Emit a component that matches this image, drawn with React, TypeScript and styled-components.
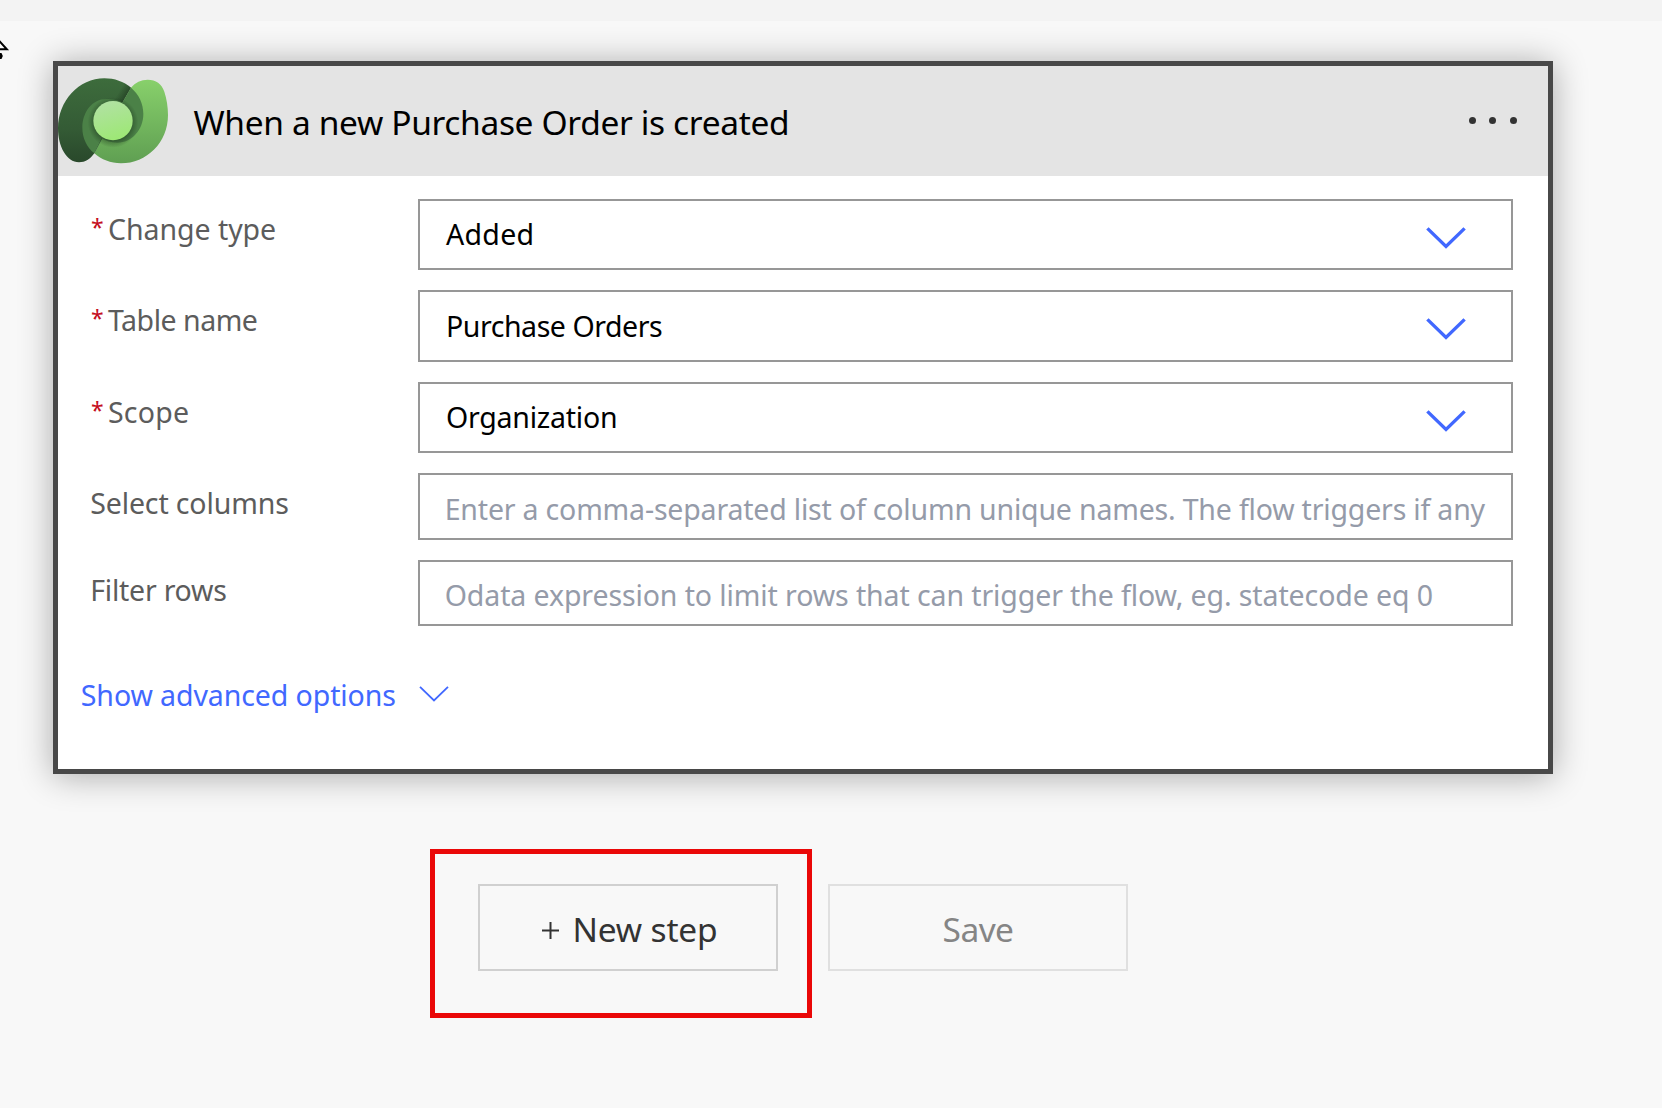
import React from "react";
import styled, { createGlobalStyle } from "styled-components";

const GlobalStyle = createGlobalStyle`
  *, *::before, *::after { box-sizing: border-box; }
  html, body { margin: 0; padding: 0; }
  body {
    background: #f8f8f8;
    font-family: "Noto Sans", "Open Sans", sans-serif;
    overflow: hidden;
  }
`;

const Page = styled.div`
  position: relative;
  width: 1662px;
  height: 1108px;
  overflow: hidden;
  background: #f8f8f8;
`;

const TopStrip = styled.div`
  height: 21px;
  background: #f3f3f3;
`;

const Pointer = styled.svg`
  position: absolute;
  left: 0;
  top: 38px;
`;

const Designer = styled.main`
  display: flex;
  flex-direction: column;
  padding: 40px 0 0 53px;
`;

const Card = styled.section`
  display: flex;
  flex-direction: column;
  width: 1500px;
  height: 713px;
  border: 5px solid #484848;
  background: #fff;
  box-shadow: 0 2px 32px rgba(0, 0, 0, 0.32);
`;

const CardHeader = styled.header`
  display: flex;
  align-items: center;
  height: 110px;
  padding-right: 31px;
  background: #e4e4e4;
`;

const Logo = styled.svg`
  flex: none;
  width: 110px;
  height: 110px;
`;

const Title = styled.h1`
  flex: 1;
  margin: 0;
  padding: 2px 0 0 25.5px;
  font-size: 33.5px;
  font-weight: 400;
  line-height: 46px;
  letter-spacing: -0.35px;
  white-space: nowrap;
  color: #000;
`;

const MenuButton = styled.button`
  display: flex;
  gap: 13.4px;
  margin-bottom: 1.4px;
  padding: 0;
  border: 0;
  background: none;
`;

const Dot = styled.i`
  width: 7.2px;
  height: 7.2px;
  border-radius: 50%;
  background: #333;
`;

const Form = styled.div`
  display: flex;
  flex-direction: column;
  gap: 20px;
  padding: 23px 35px 0 33px;
`;

const Row = styled.div<{ $height: number }>`
  display: grid;
  grid-template-columns: 327px 1fr;
  height: ${(p) => p.$height}px;
`;

const Label = styled.label<{ $spacing: number; $inset: number }>`
  display: flex;
  align-items: flex-start;
  padding-top: 10px;
  margin-left: ${(p) => p.$inset}px;
  font-size: 28.5px;
  line-height: 40px;
  letter-spacing: ${(p) => p.$spacing}px;
  white-space: nowrap;
  color: #5c5c5c;
`;

const Required = styled.span`
  width: 17px;
  font-size: 23px;
  line-height: 36px;
  color: #c50f1f;
`;

const Control = styled.div<{ $spacing: number; $placeholder?: boolean }>`
  display: flex;
  align-items: center;
  justify-content: space-between;
  padding: ${(p) => (p.$placeholder ? "4px 0 0 24.7px" : "0 45px 1px 26px")};
  border: 2px solid #979797;
  background: #fff;
  font-size: 28.5px;
  line-height: 40px;
  letter-spacing: ${(p) => p.$spacing}px;
  white-space: nowrap;
  color: ${(p) => (p.$placeholder ? "#959ba9" : "#000")};
`;

const SelectChevron = styled.svg`
  width: 40px;
  height: 22px;
  margin-top: 7px;
`;

const AdvancedLink = styled.a`
  display: flex;
  align-items: center;
  gap: 23px;
  margin: 49px 0 0 22.8px;
  font-size: 28.5px;
  line-height: 40px;
  letter-spacing: -0.09px;
  color: #4168ff;
`;

const SmallChevron = styled.svg`
  width: 30px;
  height: 16px;
  margin-bottom: 2px;
`;

const Actions = styled.div`
  display: flex;
  gap: 50px;
  padding: 110px 0 0 425px;
`;

const ActionButton = styled.button<{ $disabled?: boolean }>`
  position: relative;
  display: flex;
  align-items: center;
  justify-content: center;
  width: 300px;
  height: 87px;
  padding: 2px 0 0;
  border: 2px solid ${(p) => (p.$disabled ? "#e0e0e0" : "#d0d0d0")};
  background: transparent;
  font-family: inherit;
  font-size: 33.5px;
  line-height: 46px;
  letter-spacing: ${(p) => (p.$disabled ? -0.55 : -0.16)}px;
  color: ${(p) => (p.$disabled ? "#858585" : "#333")};
`;

const Plus = styled.svg`
  width: 17px;
  height: 17px;
  margin: 3px 13px 0 4px;
`;

const Highlight = styled.span`
  position: absolute;
  left: -50px;
  top: -37px;
  width: 382px;
  height: 169px;
  border: 5px solid #ea0808;
  pointer-events: none;
`;

interface Field {
  label: string;
  labelSpacing: number;
  text: string;
  textSpacing: number;
  height: number;
  select?: boolean;
}

const fields: Field[] = [
  { label: "Change type", labelSpacing: -0.05, text: "Added", textSpacing: 0.3, height: 71, select: true },
  { label: "Table name", labelSpacing: -0.48, text: "Purchase Orders", textSpacing: -0.45, height: 72, select: true },
  { label: "Scope", labelSpacing: 0.22, text: "Organization", textSpacing: -0.23, height: 71, select: true },
  {
    label: "Select columns",
    labelSpacing: -0.13,
    text: "Enter a comma-separated list of column unique names. The flow triggers if any",
    textSpacing: -0.185,
    height: 67,
  },
  {
    label: "Filter rows",
    labelSpacing: -0.23,
    text: "Odata expression to limit rows that can trigger the flow, eg. statecode eq 0",
    textSpacing: -0.105,
    height: 66,
  },
];

function DataverseLogo() {
  return (
    <Logo viewBox="174 198 330 330">
      <defs>
        <linearGradient id="dvLight" x1="0" y1="0" x2="0" y2="1">
          <stop offset="0" stopColor="#88d06b" />
          <stop offset="1" stopColor="#5f9f52" />
        </linearGradient>
        <linearGradient id="dvDark" x1="0" y1="0" x2="0" y2="1">
          <stop offset="0" stopColor="#3d6c3c" />
          <stop offset="0.6" stopColor="#345b35" />
          <stop offset="1" stopColor="#29482b" />
        </linearGradient>
        <linearGradient id="dvCore" x1="0.3" y1="0" x2="0.6" y2="1">
          <stop offset="0" stopColor="#b1e1a3" />
          <stop offset="1" stopColor="#9de874" />
        </linearGradient>
        <radialGradient id="dvShade" cx="339" cy="367" r="76" gradientUnits="userSpaceOnUse">
          <stop offset="0.72" stopColor="#183018" stopOpacity="0.45" />
          <stop offset="1" stopColor="#183018" stopOpacity="0" />
        </radialGradient>
        <linearGradient id="dvEdge" x1="380" y1="286" x2="358" y2="273" gradientUnits="userSpaceOnUse">
          <stop offset="0" stopColor="#162b17" stopOpacity="0.5" />
          <stop offset="1" stopColor="#162b17" stopOpacity="0" />
        </linearGradient>
      </defs>
      <path d="M393 263C406 247 423 239 443 239C468 239 485 251 493 275C500 296 504 320 504 345C504 428 440 490 363 490C332 490 304 479 283 460L305 415L367 308Z" fill="url(#dvLight)" />
      <path d="M393 263C371 245 344 235 313 235C237 235 174 303 174 385C174 440 200 487 237 487C256 487 270 478 283 460L307 415L367 308Z" fill="url(#dvDark)" />
      <path d="M393 263L367 308L335 308L355 242C370 246 383 254 393 263Z" fill="url(#dvEdge)" />
      <path d="M393 263C417 284 430 310 430 342C430 390 395 428 352 428C333 428 317 423 305 415L283 460C260 441 247 414 247 383C247 335 278 297 318 297C340 297 355 301 367 308Z" fill="#4b8147" />
      <circle cx="339" cy="367" r="76" fill="url(#dvShade)" />
      <circle cx="339" cy="362" r="59" fill="url(#dvCore)" />
    </Logo>
  );
}

export default function App() {
  return (
    <>
      <GlobalStyle />
      <Page>
        <TopStrip />
        <Pointer width="12" height="24" viewBox="0 0 12 24">
          <path d="M-4 -0.5L6.8 11.2H-3" fill="#fff" stroke="#000" strokeWidth="2" />
          <path d="M0 15H1.5L2.8 18L1.5 21H0Z" fill="#000" />
        </Pointer>
        <Designer>
          <Card>
            <CardHeader>
              <DataverseLogo />
              <Title>When a new Purchase Order is created</Title>
              <MenuButton aria-label="More">
                <Dot />
                <Dot />
                <Dot />
              </MenuButton>
            </CardHeader>
            <Form>
              {fields.map((f) => (
                <Row key={f.label} $height={f.height}>
                  <Label $spacing={f.labelSpacing} $inset={f.select ? 0 : -0.8}>
                    {f.select && <Required>*</Required>}
                    {f.label}
                  </Label>
                  <Control $spacing={f.textSpacing} $placeholder={!f.select}>
                    {f.text}
                    {f.select && (
                      <SelectChevron viewBox="0 0 40 22" fill="none" stroke="#4168ff" strokeWidth="3.4">
                        <path d="M1.4 1.4L20 19.4L38.6 1.4" />
                      </SelectChevron>
                    )}
                  </Control>
                </Row>
              ))}
            </Form>
            <AdvancedLink>
              Show advanced options
              <SmallChevron viewBox="0 0 30 16" fill="none" stroke="#4168ff" strokeWidth="1.8">
                <path d="M1 0.8L15 14.5L29 0.8" />
              </SmallChevron>
            </AdvancedLink>
          </Card>
          <Actions>
            <ActionButton>
              <Plus viewBox="0 0 17 17" stroke="#333" strokeWidth="2">
                <path d="M8.5 0V17M0 8.5H17" />
              </Plus>
              New step
              <Highlight />
            </ActionButton>
            <ActionButton $disabled>Save</ActionButton>
          </Actions>
        </Designer>
      </Page>
    </>
  );
}
